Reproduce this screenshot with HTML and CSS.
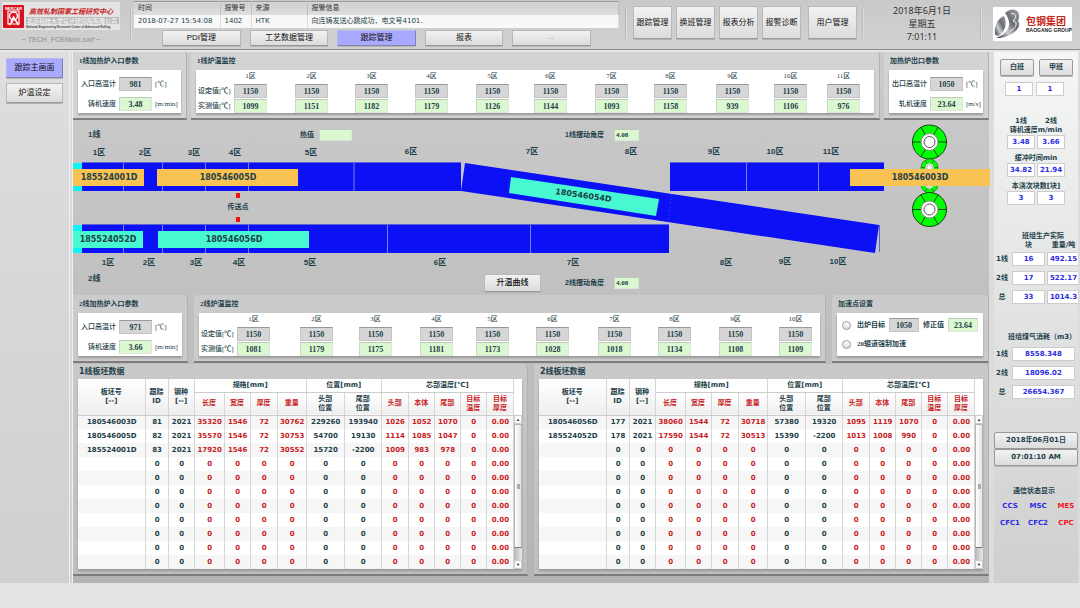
FILE: index.html
```html
<!DOCTYPE html>
<html lang="zh-CN">
<head>
<meta charset="utf-8">
<title>TECH_FCEMain</title>
<link rel="stylesheet" href="styles.css">
</head>
<body>
<header class="topbar">
  <div class="brand">
    <svg class="brand-logo" viewBox="0 0 118 28" role="img" aria-label="高效轧制国家工程研究中心">
      <rect width="118" height="28" fill="#e4e4e4"/>
      <rect x="1" y="3" width="21" height="23" rx="1" fill="#d8121c"/>
      <text x="11.500" y="7.500" class="logo-mark">NERCAR</text>
      <path d="M6 9h11v13H6z" fill="none" stroke="#fff" stroke-width="1.200"/>
      <circle cx="11.500" cy="14" r="4" fill="none" stroke="#fff" stroke-width="1.500"/>
      <path d="M9 20l2.500-5 5 8M7 23l4-4" fill="none" stroke="#fff" stroke-width="1.500"/>
      <text x="27" y="12" class="logo-cn">高效轧制国家工程研究中心</text>
      <rect x="24" y="15" width="93" height="7" fill="#b9b9b9"/>
      <text x="70" y="21" class="logo-strip">北京科技大学设计研究院有限公司</text>
      <text x="24" y="26" class="logo-en">National Engineering Research Center of Advanced Rolling</text>
    </svg>
    <p class="file-name">~ TECH_FCEMain.swf ~</p>
  </div>
  <div class="divider"></div>
  <div class="alarm">
    <table class="alarm-table">
      <thead><tr><th class="a-time">时间</th><th class="a-code">报警号</th><th class="a-source">来源</th><th>报警信息</th></tr></thead>
      <tbody><tr><td>2018-07-27 15:54:08</td><td>1402</td><td>HTK</td><td>向连铸发送心跳成功，电文号4101.</td></tr></tbody>
    </table>
    <nav class="tabs">
      <button type="button">PDI管理</button>
      <button type="button">工艺数据管理</button>
      <button type="button" class="active">跟踪管理</button>
      <button type="button">报表</button>
      <button type="button" class="empty">--</button>
    </nav>
  </div>
  <div class="divider"></div>
  <nav class="tools">
    <button type="button">跟踪管理</button>
    <button type="button">换班管理</button>
    <button type="button">报表分析</button>
    <button type="button">报警诊断</button>
    <button type="button" class="wide">用户管理</button>
  </nav>
  <div class="divider"></div>
  <div class="date"><span>2018年6月1日</span><span>星期五</span><span class="clock">7:01:11</span></div>
  <div class="divider"></div>
  <svg class="client-logo" viewBox="0 0 79 34" role="img" aria-label="包钢集团">
    <defs><linearGradient id="steel" x1="0" y1="1" x2="1" y2="0"><stop offset="0" stop-color="#2f3236"/><stop offset=".35" stop-color="#c9ccd0"/><stop offset=".6" stop-color="#6b6e73"/><stop offset="1" stop-color="#9a9da1"/></linearGradient></defs>
    <rect width="79" height="34" fill="#fff"/>
    <path d="M11 9C4 12 1 19 2 27C3 29 5 29 7 28C13 23 14 15 11 9z" fill="url(#steel)"/>
    <path d="M12 6C16 2 22 1 25 5C27 9 26 12 25 14C30 19 20 31 3 31C14 27 21 18 12 6z" fill="url(#steel)"/>
    <path d="M18 7c5-2 6 4 2 7c5 0 4 7-3 10" fill="none" stroke="#fff" stroke-width="1"/>
    <text x="33" y="18" class="client-cn">包钢集团</text>
    <text x="33" y="25" class="client-en">BAOGANG GROUP</text>
  </svg>
</header>

<div class="content">
  <nav class="side">
    <button type="button" class="active">跟踪主画面</button>
    <button type="button">炉温设定</button>
  </nav>

  <main class="main">
    <div class="panels upper">
      <section class="panel">
        <h2>1线加热炉入口参数</h2>
        <div class="box params">
          <label for="in1t">入口高温计</label><input id="in1t" class="val grey" value="981" readonly><span>[℃]</span>
          <label for="in1s">铸机速度</label><input id="in1s" class="val green" value="3.48" readonly><span>[m/min]</span>
        </div>
      </section>
      <section class="panel">
        <h2>1线炉温监控</h2>
        <div class="box zones zones-1" id="zones1"></div>
      </section>
      <section class="panel">
        <h2>加热炉出口参数</h2>
        <div class="box params">
          <label for="outt">出口高温计</label><input id="outt" class="val grey" value="1050" readonly><span>[℃]</span>
          <label for="outs">轧机速度</label><input id="outs" class="val green" value="23.64" readonly><span>[m/s]</span>
        </div>
      </section>
    </div>

    <section class="track">
      <div class="track-row first">
        <span class="line-name">1线</span>
        <div class="pair heat"><label for="heat">热值</label><input id="heat" class="val green" value="" readonly></div>
        <div class="pair angle"><label for="ang1">1线摆动角度</label><input id="ang1" class="val green small" value="4.08" readonly></div>
      </div>
      <svg class="track-map" viewBox="73 145 916 125">
        <defs>
          <g id="roll">
            <circle r="17" fill="#0f0" stroke="#164016" stroke-width="1"/>
            <path d="M-17 0H17M-8.500-14.700L8.500 14.700M8.500-14.700L-8.500 14.700" stroke="#123c12" stroke-width="1"/>
            <circle r="8.500" fill="#fff" stroke="#888" stroke-width="1"/>
            <circle r="5.500" fill="#fff" stroke="#555" stroke-width="1"/>
          </g>
        </defs>
        <g class="zone-names">
          <text x="99" y="155">1区</text><text x="145" y="155">2区</text><text x="194" y="155">3区</text><text x="235" y="155">4区</text><text x="311" y="155">5区</text><text x="411" y="154">6区</text><text x="532" y="154">7区</text><text x="631" y="154">8区</text><text x="714" y="154">9区</text><text x="775" y="154">10区</text><text x="831" y="154">11区</text>
          <text x="108" y="265">1区</text><text x="149" y="265">2区</text><text x="196" y="265">3区</text><text x="239" y="265">4区</text><text x="310" y="265">5区</text><text x="440" y="265">6区</text><text x="573" y="265">7区</text><text x="726" y="265">8区</text><text x="785" y="264">9区</text><text x="838" y="264">10区</text>
        </g>
        <g fill="#0cf4f4"><rect x="73" y="163" width="9" height="28"/><rect x="73" y="225" width="9" height="28"/></g>
        <g class="furnace">
          <rect x="82" y="163" width="379" height="28"/>
          <rect x="82" y="225" width="587" height="28"/>
          <rect x="670" y="163" width="214" height="28"/>
          <path d="M465 163L879 225L875 253L461 191z"/>
        </g>
        <path d="M82 162.500H461M82 224.500H669M670 162.500H884M879.500 225V252" stroke="#5c62d8" fill="none"/>
        <path class="seams" d="M123.500 163v28M162.500 163v28M205.500 163v28M248.500 163v28M354 163v28M123.500 225v28M162.500 225v28M205.500 225v28M248.500 225v28M387.500 225v28M530.500 225v28M746.500 163v28M818.500 163v28"/>
        <path d="M671.500 194L668.500 221" stroke="#2a2ff8" stroke-dasharray="2 2"/>
        <use href="#roll" transform="translate(929.500 142)"/>
        <use href="#roll" transform="translate(929.500 167.500) scale(.5)"/>
        <use href="#roll" transform="translate(929.500 184.500) scale(.5)"/>
        <use href="#roll" transform="translate(929.500 209.500)"/>
        <g fill="#f9c353"><rect x="73" y="169" width="71" height="17"/><rect x="157" y="169" width="141" height="17"/><rect x="850" y="169" width="140" height="17"/></g>
        <g fill="#48f8d0"><rect x="73" y="231" width="70" height="17"/><rect x="158" y="231" width="151" height="17"/><path d="M511 177L659 199L656 216L509 193z"/></g>
        <g class="slab">
          <text x="109" y="180">185524001D</text><text x="228" y="180">180546005D</text><text x="920" y="180">180546003D</text>
          <text x="108" y="242">185524052D</text><text x="234" y="242">180546056D</text>
          <text transform="translate(583 198) rotate(8)">180546054D</text>
        </g>
        <rect x="236" y="193" width="4" height="5" fill="#f01010"/><rect x="236" y="217" width="4" height="5" fill="#f01010"/>
        <text x="238" y="209" class="pass">传送点</text>
      </svg>
      <div class="track-row last">
        <span class="line-name">2线</span>
        <button type="button" class="curve">升温曲线</button>
        <div class="pair angle"><label for="ang2">2线摆动角度</label><input id="ang2" class="val green small" value="4.08" readonly></div>
      </div>
    </section>

    <div class="panels lower">
      <section class="panel">
        <h2>2线加热炉入口参数</h2>
        <div class="box params">
          <label for="in2t">入口高温计</label><input id="in2t" class="val grey" value="971" readonly><span>[℃]</span>
          <label for="in2s">铸机速度</label><input id="in2s" class="val green" value="3.66" readonly><span>[m/min]</span>
        </div>
      </section>
      <section class="panel">
        <h2>2线炉温监控</h2>
        <div class="box zones zones-2" id="zones2"></div>
      </section>
      <section class="panel">
        <h2>加速点设置</h2>
        <div class="box accel">
          <div class="accel-row">
            <input type="radio" name="accel" id="acc1"><label for="acc1">出炉目标</label>
            <input class="val grey" aria-label="出炉目标值" value="1050">
            <label for="fix">修正值</label><input id="fix" class="val green" value="23.64">
          </div>
          <div class="accel-row"><input type="radio" name="accel" id="acc2"><label for="acc2">20辊道强制加速</label></div>
        </div>
      </section>
    </div>

    <div class="tables">
      <section class="panel"><h2 class="big">1线板坯数据</h2><div class="box grid-box" id="slabs1"></div></section>
      <section class="panel"><h2 class="big">2线板坯数据</h2><div class="box grid-box" id="slabs2"></div></section>
    </div>
  </main>

  <aside class="info">
    <div class="shift"><button type="button">白班</button><button type="button">甲班</button></div>
    <div class="two wide-gap"><input aria-label="白班" value="1" readonly><input aria-label="甲班" value="1" readonly></div>
    <div class="block speeds">
      <div class="two names"><span>1线</span><span>2线</span></div>
      <p>铸机速度m/min</p>
      <div class="two"><input aria-label="1线铸机速度" value="3.48" readonly><input aria-label="2线铸机速度" value="3.66" readonly></div>
      <p class="spaced">缓冲时间min</p>
      <div class="two"><input aria-label="1线缓冲时间" value="34.82" readonly><input aria-label="2线缓冲时间" value="21.94" readonly></div>
      <p class="spaced">本浇次块数[块]</p>
      <div class="two"><input aria-label="1线块数" value="3" readonly><input aria-label="2线块数" value="3" readonly></div>
    </div>
    <div class="block output">
      <p>班组生产实际</p>
      <div class="rows">
        <span></span><span class="col">块</span><span class="col">重量/吨</span>
        <label for="p1">1线</label><input id="p1" value="16" readonly><input aria-label="1线重量" value="492.15" readonly>
        <label for="p2">2线</label><input id="p2" value="17" readonly><input aria-label="2线重量" value="522.17" readonly>
        <label for="p3">总</label><input id="p3" value="33" readonly><input aria-label="总重量" value="1014.3" readonly>
      </div>
    </div>
    <div class="block gas">
      <p>班组煤气消耗（m3）</p>
      <div class="rows">
        <label for="g1">1线</label><input id="g1" value="8558.348" readonly>
        <label for="g2">2线</label><input id="g2" value="18096.02" readonly>
        <label for="g3">总</label><input id="g3" value="26654.367" readonly>
      </div>
    </div>
    <div class="stamp"><button type="button">2018年06月01日</button><button type="button">07:01:10 AM</button></div>
    <div class="comm">
      <p>通信状态显示</p>
      <ul><li>CCS</li><li>MSC</li><li class="down">MES</li><li>CFC1</li><li>CFC2</li><li class="down">CPC</li></ul>
    </div>
  </aside>
</div>
<script src="app.js"></script>
</body>
</html>
```

FILE: styles.css
```css
* { box-sizing: border-box; }
body {
  margin: 0;
  min-height: 100vh;
  display: flex;
  flex-direction: column;
  background: #e3e3e3;
  color: #1d3f4a;
  font: 8px/10px "Liberation Sans", "Noto Sans CJK SC", sans-serif;
}
h2, p, ul { margin: 0; padding: 0; }
input { font: inherit; color: inherit; min-width: 0; padding: 0; margin: 0; text-align: center; border-radius: 0; }
button {
  font: 8px/10px "Liberation Sans", "Noto Sans CJK SC", sans-serif;
  color: #111;
  padding: 0;
  white-space: nowrap;
  border: 1px solid #b8b8b8;
  border-bottom-color: #999;
  border-radius: 1px;
  background: linear-gradient(#f2f2f2, #dcdcdc);
  box-shadow: 0 1px 0 #b4b4b4;
}
button.active { background: #a9a9ff; border-color: #b8b8e8 #8080b0 #8484a8 #b8b8e8; }

/* Header */
.topbar {
  display: flex;
  align-items: flex-start;
  height: 50px;
  background: linear-gradient(#c9c9c9, #d2d2d2);
  border-bottom: 1px solid #8c8c8c;
}
.brand { width: 130px; padding: 2px 0 0 2px; }
.brand-logo { display: block; width: 118px; height: 28px; }
.logo-mark { font: bold 4px "Liberation Sans", sans-serif; fill: #fff; text-anchor: middle; }
.logo-cn { font: italic bold 7px "Noto Sans CJK SC", sans-serif; fill: #c81820; }
.logo-strip { font: bold 6px "Noto Sans CJK SC", sans-serif; fill: #eee; text-anchor: middle; }
.logo-en { font: bold 3px "Liberation Sans", sans-serif; fill: #444; }
.file-name { margin-top: 5px; width: 118px; text-align: center; color: #a2a2a2; font-weight: bold; font-size: 7px; }
.divider { width: 2px; height: 31px; margin-top: 8px; background: #dedede; border-left: 1px solid #b9b9b9; }
.alarm { flex: 1; margin: 1px 6px 0 2px; }
.alarm-table { width: 100%; border-collapse: collapse; table-layout: fixed; font: 7px/9px "DejaVu Sans", "Noto Sans CJK SC", sans-serif; }
.alarm-table th { height: 13px; padding: 0 4px; text-align: left; font-weight: normal; color: #333; background: linear-gradient(#cfcfcf, #dfdfdf); border-right: 1px solid #bfbfbf; border-top: 1px solid #999; }
.alarm-table td { height: 13px; padding: 0 4px; background: #f8f8f8; border-right: 1px solid #ddd; white-space: nowrap; }
.a-time { width: 86px; } .a-code { width: 31px; } .a-source { width: 56px; }
.tabs { display: flex; gap: 9px; padding: 2px 28px 0; }
.tabs button { flex: 1; height: 16px; }
.tabs .empty { color: #aaa; }
.tools { display: flex; gap: 4px; margin: 6px 5px 0 6px; }
.tools button { width: 39px; height: 33px; }
.tools .wide { width: 49px; margin-left: 3px; }
.date { width: 116px; padding-top: 4px; display: flex; flex-direction: column; align-items: center; font: 9px/13px "Noto Sans", "Noto Sans CJK SC", sans-serif; color: #333; }
.client-logo { width: 79px; height: 34px; margin: 7px 8px 0 11px; }
.client-cn { font: bold 10px "Noto Sans CJK SC", sans-serif; fill: #c8281c; }
.client-en { font: bold 5px "Liberation Sans", sans-serif; fill: #222; }

/* Page frame */
.content { display: grid; grid-template-columns: 73px minmax(0, 1fr) 84px; padding-right: 2px; background: #dcdcdc; border-top: 2px solid #e6e6e6; }
.side { display: flex; flex-direction: column; gap: 5px; padding: 6px 6px 0; border-right: 4px double #f0f0f0; background: linear-gradient(#dedede, #d0d0d0); }
.side button { height: 20px; }
.main { margin-right: 5px; background: linear-gradient(#cbcbcb, #b4b4b4); padding-bottom: 7px; }

/* Panels */
.panels, .tables { display: grid; }
.panels { height: 68px; }
.upper { grid-template-columns: minmax(0, 114fr) minmax(0, 689fr) minmax(0, 105fr); gap: 4px; }
.lower { grid-template-columns: minmax(0, 115fr) minmax(0, 632fr) minmax(0, 157fr); gap: 6px; }
.tables { grid-template-columns: minmax(0, 1fr) minmax(0, 1fr); gap: 6px; margin-top: 1px; }
.panel { display: flex; flex-direction: column; padding: 0 5px 5px; background: #d3d3d3; border-radius: 4px 4px 0 0; border-bottom: 2px solid #7d7d7d; border-right: 1px solid #b0b0b0; }
.lower .panel { background: #cbcbcb; }
.tables .panel { background: linear-gradient(#c9c9c9, #bebebe); }
.panel h2 { height: 18px; padding-left: 1px; font: bold 7px/18px "Liberation Serif", "Noto Sans CJK SC", serif; white-space: nowrap; }
.panel h2.big { height: 15px; padding-left: 1px; font: bold 8px/15px "DejaVu Sans", "Noto Sans CJK SC", sans-serif; }
.box { flex: 1; background: #fff; box-shadow: 0 2px 2px #999; font: 7px/9px "Liberation Serif", "Noto Sans CJK SC", serif; }
.val { width: 33px; height: 14px; font: bold 8px/10px "Liberation Serif", serif; border: 1px solid #c4c4c4; border-top-color: #999; }
.grey { background: #d6d6d6; }
.green { background: #dbf8d0; border-color: #bcc8b8 #dde6da #dde6da #ccd6c8; }
.small { width: 25px; height: 12px; text-align: left; padding-left: 1px; font-size: 7px; }
.params { display: grid; grid-template-columns: 38px 33px 1fr; grid-template-rows: 14px 14px; row-gap: 6px; column-gap: 3px; align-content: center; align-items: center; padding-top: 5px; white-space: nowrap; }
.params label { text-align: right; font-weight: 500; }
.zones { display: grid; grid-template-rows: 13px 14px 14px; row-gap: 1px; align-items: center; white-space: nowrap; }
.zones-1 { grid-template-columns: 38px 61fr 60fr 60fr 61fr 58fr 61fr 59fr 62fr 58fr 53fr 47fr; }
.zones-2 { grid-template-columns: 38px 63fr 59fr 61fr 56fr 60fr 62fr 60fr 61fr 60fr 41fr; }
.zones .name { width: 33px; text-align: center; font-weight: 500; }
.zones .side-name { padding-left: 2px; font-weight: 500; }
.accel { display: flex; flex-direction: column; gap: 5px; padding: 5px; }
.accel-row { display: flex; align-items: center; gap: 4px; height: 14px; font-weight: bold; white-space: nowrap; }
.accel-row input[type="radio"] { appearance: none; width: 9px; height: 9px; margin-right: 2px; border: 1px solid #999; border-radius: 50%; background: linear-gradient(#fff, #ddd); }
.accel-row .val { width: 30px; }

/* Furnace diagram */
.track { font-weight: bold; }
.track-row { display: grid; grid-template-columns: 227fr 184fr 81fr 424fr; height: 25px; align-items: center; font-size: 7px; }
.first { padding-top: 4px; }
.line-name { grid-column: 1; padding-left: 15px; font-size: 8px; }
.last .line-name { align-self: start; padding-top: 4px; }
.heat { grid-column: 2; }
.curve { grid-column: 3; width: 57px; height: 18px; font-weight: 500; }
.angle { grid-column: 4; }
.pair { display: flex; align-items: center; gap: 5px; white-space: nowrap; }
.angle { display: grid; grid-template-columns: 44px 25px; }
.heat .val { height: 12px; }
.track-map { display: block; width: 100%; overflow: visible; }
.track-map text { text-anchor: middle; fill: #1d3f4a; }
.zone-names { font: bold 8px "Liberation Sans", "Noto Sans CJK SC", sans-serif; }
.slab { font: bold 8px "DejaVu Sans", sans-serif; }
.pass { font: bold 7px "Noto Sans CJK SC", sans-serif; }
.furnace { fill: #0c10f4; }
.seams { stroke: #7a7ef0; stroke-width: 1; fill: none; }

/* Slab tables */
.grid-box { display: flex; padding: 0; }
.slabs { flex: 1; width: 0; border-collapse: collapse; table-layout: fixed; font: bold 7px/9px "DejaVu Sans", "Noto Sans CJK SC", sans-serif; }
.slabs th, .slabs td { padding: 0; text-align: center; white-space: nowrap; border-right: 1px solid #d6d6d6; }
.slabs thead th { background: linear-gradient(#fff, #eee); border-bottom: 1px solid #ccc; }
.slabs thead .group { height: 13px; background: #fff; }
.slabs thead .sub { height: 23px; }
.slabs td { height: 14px; padding-left: 1px; }
.slabs tbody tr:nth-child(odd) td { background: #f6f6f6; }
.slabs .red { color: #c81c24; }
.w67 { width: 67px; } .w23 { width: 23px; } .w26 { width: 26px; } .w27 { width: 27px; } .w29 { width: 29px; } .w30 { width: 30px; } .w37 { width: 37px; } .w38 { width: 38px; }
.scroll { width: 8px; margin-top: 36px; display: flex; flex-direction: column; background: linear-gradient(90deg, #b4b8ba, #e8e8e8); }
.scroll button { height: 9px; border: 1px solid #ccc; background: #fafafa; font-size: 4px; line-height: 7px; box-shadow: none; }
.thumb { flex: 1; margin-bottom: 12px; display: grid; place-items: center; background: linear-gradient(90deg, #fff, #e4e4e4); border: 1px solid #b4b4b4; border-bottom-color: #777; }
.thumb::after { content: ""; width: 3px; height: 5px; background: #aaa; }

/* Right column */
.info { display: flex; flex-direction: column; padding-top: 7px; background: linear-gradient(#f4f7f5, #cfcfcf); font: bold 7px/9px "DejaVu Sans", "Noto Sans CJK SC", sans-serif; text-align: center; overflow: hidden; white-space: nowrap; }
.info input { height: 14px; width: 100%; background: #fff; border: 1px solid #ccc; color: #2c2ce4; }
.info button { font: bold 7px/9px "DejaVu Sans", "Noto Sans CJK SC", sans-serif; color: #1d3f4a; border: 1px solid #999; border-radius: 2px; }
.shift { display: grid; grid-template-columns: 1fr 1fr; gap: 5px; padding: 0 5px 6px 6px; }
.shift button { height: 17px; }
.two { display: grid; grid-template-columns: 28px 28px; gap: 2px; justify-content: center; }
.wide-gap { gap: 3px; padding-right: 3px; }
.speeds { margin-top: 21px; }
.spaced { margin-top: 5px; }
.output { margin-top: 27px; }
.output p { padding-left: 14px; }
.rows { display: grid; align-items: center; row-gap: 5px; column-gap: 2px; }
.output .rows { grid-template-columns: 16px 33px 33px; }
.output .col { margin-bottom: -3px; }
.gas { margin-top: 29px; }
.gas p { padding-left: 12px; margin-bottom: 5px; }
.gas .rows { grid-template-columns: 16px 1fr; padding-right: 3px; }
.stamp { display: grid; margin-top: 33px; }
.stamp button { height: 17px; }
.comm { margin-top: 21px; }
.comm p { padding-right: 4px; }
.comm ul { display: grid; grid-template-columns: repeat(3, 28px); row-gap: 8px; margin-top: 6px; padding-left: 2px; list-style: none; color: #2c2ce4; }
.comm .down { color: #f01820; }
```

FILE: app.js
```js
const zones = {
  zones1: [1099, 1151, 1182, 1179, 1126, 1144, 1093, 1158, 939, 1106, 976],
  zones2: [1081, 1179, 1175, 1181, 1173, 1028, 1018, 1134, 1108, 1109]
};

for (const [id, actual] of Object.entries(zones)) {
  const field = (kind, name, i, value) =>
    `<input class="val ${kind}" aria-label="${i + 1}区${name}" value="${value}" readonly>`;
  document.getElementById(id).innerHTML =
    '<span></span>' + actual.map((_, i) => `<span class="name">${i + 1}区</span>`).join('') +
    '<span class="side-name">设定值[℃]</span>' + actual.map((_, i) => field('grey', '设定值', i, 1150)).join('') +
    '<span class="side-name">实测值[℃]</span>' + actual.map((v, i) => field('green', '实测值', i, v)).join('');
}

const slabs = {
  slabs1: [
    '180546003D 81 2021 35320 1546 72 30762 229260 193940 1026 1052 1070 0 0.00',
    '180546005D 82 2021 35570 1546 72 30753 54700 19130 1114 1085 1047 0 0.00',
    '185524001D 83 2021 17920 1546 72 30552 15720 -2200 1009 983 978 0 0.00'
  ],
  slabs2: [
    '180546056D 177 2021 38060 1544 72 30718 57380 19320 1095 1119 1070 0 0.00',
    '185524052D 178 2021 17590 1544 72 30513 15390 -2200 1013 1008 990 0 0.00'
  ]
};
const widths = [67, 23, 26, 30, 26, 27, 29, 38, 37, 27, 26, 26, 26, 27];
const ROWS = 11;
const isRed = i => (i > 2 && i < 7) || i > 8;
const sub = ['长度', '宽度', '厚度', '重量', '头部<br>位置', '尾部<br>位置', '头部', '本体', '尾部', '目标<br>温度', '目标<br>厚度'];

for (const [id, lines] of Object.entries(slabs)) {
  const rows = lines.map(l => l.split(' '));
  while (rows.length < ROWS) rows.push(['', ...Array(12).fill('0'), '0.00']);
  document.getElementById(id).innerHTML = `<table class="slabs">
    <colgroup>${widths.map(w => `<col class="w${w}">`).join('')}</colgroup>
    <thead>
      <tr><th rowspan="2">板坯号<br>[--]</th><th rowspan="2">跟踪<br>ID</th><th rowspan="2">钢种<br>[--]</th>
      <th class="group" colspan="4">规格[mm]</th><th class="group" colspan="2">位置[mm]</th><th class="group" colspan="5">芯部温度[℃]</th></tr>
      <tr>${sub.map((s, i) => `<th class="sub${isRed(i + 3) ? ' red' : ''}">${s}</th>`).join('')}</tr>
    </thead>
    <tbody>${rows.map(r => `<tr>${r.map((c, i) => `<td${isRed(i) ? ' class="red"' : ''}>${c}</td>`).join('')}</tr>`).join('')}</tbody>
  </table>
  <div class="scroll"><button type="button" aria-label="向上">▲</button><div class="thumb"></div><button type="button" aria-label="向下">▼</button></div>`;
}
```
